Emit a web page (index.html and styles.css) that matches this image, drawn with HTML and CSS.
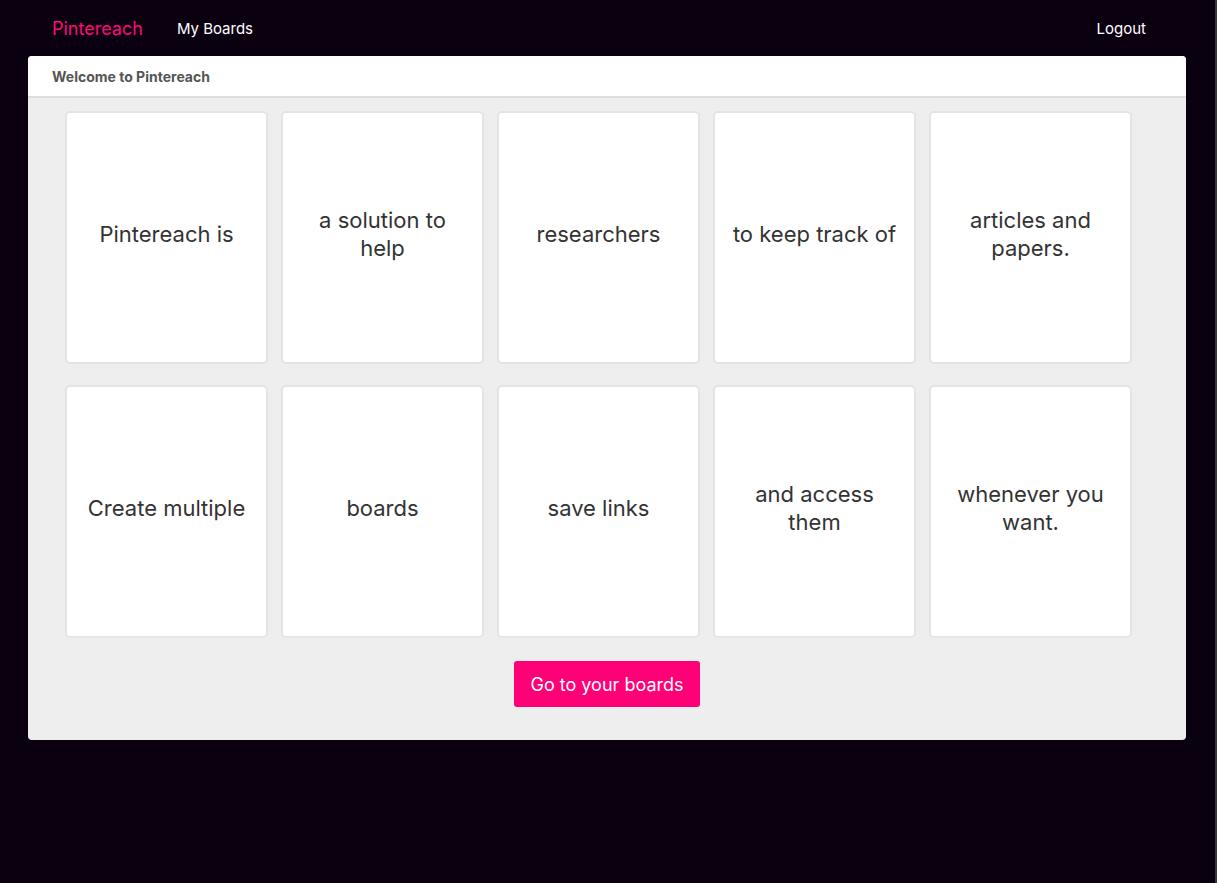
FILE: index.html
```html
<!DOCTYPE html>
<html>
<head>
<meta charset="utf-8">
<link rel="stylesheet" href="styles.css">
</head>
<body>
<nav class="nav">
  <div class="nav-left">
    <a class="brand">Pintereach</a>
    <a class="nav-link">My Boards</a>
  </div>
  <a class="nav-link">Logout</a>
</nav>
<main class="panel">
  <div class="panel-header">Welcome to Pintereach</div>
  <div class="panel-body">
    <div class="grid">
      <div class="card">Pintereach is</div>
      <div class="card">a solution to help</div>
      <div class="card">researchers</div>
      <div class="card">to keep track of</div>
      <div class="card">articles and papers.</div>
      <div class="card">Create multiple</div>
      <div class="card">boards</div>
      <div class="card">save links</div>
      <div class="card">and access them</div>
      <div class="card">whenever you want.</div>
    </div>
    <div class="actions">
      <button class="btn">Go to your boards</button>
    </div>
  </div>
</main>
</body>
</html>
```

FILE: styles.css
```css
html, body {
  margin: 0;
  padding: 0;
  height: 100%;
}
body {
  background: #0b0010;
  font-family: Inter, "Noto Sans", sans-serif;
  box-shadow: inset -2px 0 0 #3a3540;
}
.nav {
  height: 56px;
  display: flex;
  align-items: center;
  justify-content: space-between;
  padding: 0 71px 0 52px;
}
.nav-left {
  display: flex;
  align-items: center;
  gap: 34px;
}
.brand {
  color: #ff0a78;
  font-size: 18px;
}
.nav-link {
  color: #ffffff;
  font-size: 15px;
}
.panel {
  margin: 0 31px 0 28px;
  background: #eeeeee;
  border-radius: 4px;
  overflow: hidden;
}
.panel-header {
  background: #ffffff;
  height: 39px;
  border-bottom: 2px solid #dddddd;
  box-sizing: content-box;
  display: flex;
  align-items: center;
  padding: 1px 24px 0;
  font-size: 14px;
  font-weight: 700;
  color: #555555;
}
.panel-body {
  padding: 13px 0 33px;
}
.grid {
  display: grid;
  grid-template-columns: repeat(5, 203px);
  grid-auto-rows: 253px;
  column-gap: 13px;
  row-gap: 21px;
  padding-left: 37px;
}
.card {
  background: #ffffff;
  border: 2px solid #e4e4e4;
  border-radius: 5px;
  display: flex;
  align-items: center;
  justify-content: center;
  text-align: center;
  padding: 0 14px 7px;
  font-size: 22px;
  line-height: 28px;
  color: #333333;
}
.actions {
  display: flex;
  justify-content: center;
  margin-top: 23px;
}
.btn {
  background: #ff0077;
  color: #ffffff;
  border: none;
  border-radius: 3px;
  width: 186px;
  height: 46px;
  font-family: Inter, "Noto Sans", sans-serif;
  font-size: 18px;
}
```
